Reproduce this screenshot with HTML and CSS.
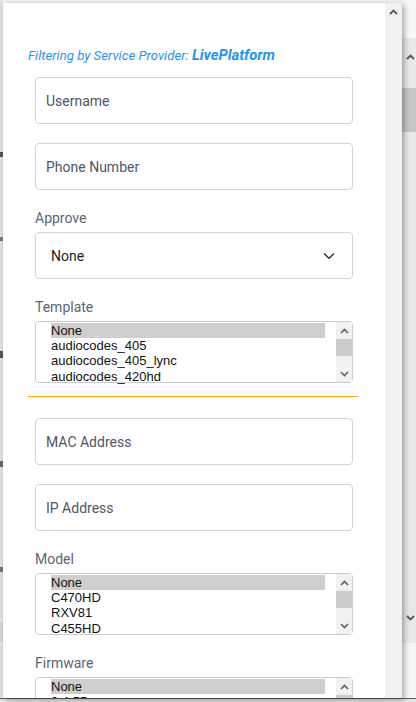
FILE: index.html
```html
<!DOCTYPE html>
<html>
<head>
<meta charset="utf-8">
<link rel="stylesheet" href="styles.css">
</head>
<body>
<div class="page">
  <div class="page-main">
    <div class="bg-left">
      <div class="mark m1"></div>
      <div class="mark m2"></div>
      <div class="mark m3"></div>
      <div class="mark m4"></div>
      <div class="mark m5"></div>
      <div class="mark m6"></div>
    </div>
    <div class="bg-center"></div>
    <div class="bg-right">
      <div class="bg-top"></div>
      <div class="bg-scroll">
        <div class="bg-btn-up"><svg width="9" height="6" viewBox="0 0 9 6"><polyline points="1,5 4.5,1.5 8,5" fill="none" stroke="#555" stroke-width="1.8"/></svg></div>
        <div class="bg-thumb"></div>
        <div class="bg-spacer"></div>
        <div class="bg-btn-down"><svg width="9" height="6" viewBox="0 0 9 6"><polyline points="1,1 4.5,4.5 8,1" fill="none" stroke="#555" stroke-width="1.8"/></svg></div>
      </div>
      <div class="bg-bottom"></div>
    </div>
  </div>
  <div class="page-line"></div>
  <div class="page-foot"></div>
</div>

<div class="modal">
  <div class="modal-body">
    <div class="title">Filtering by Service Provider: <b>LivePlatform</b></div>

    <div class="field">Username</div>
    <div class="field field-last">Phone Number</div>

    <div class="label">Approve</div>
    <div class="field select">
      <span class="select-value">None</span>
      <svg width="12" height="8" viewBox="0 0 12 8"><polyline points="1,1.5 6,6.3 11,1.5" fill="none" stroke="#333" stroke-width="1.5"/></svg>
    </div>

    <div class="label">Template</div>
    <div class="listbox">
      <div class="list-items">
        <div class="item selected">None</div>
        <div class="item">audiocodes_405</div>
        <div class="item">audiocodes_405_lync</div>
        <div class="item">audiocodes_420hd</div>
      </div>
      <div class="lb-scroll">
        <div class="lb-btn"><svg width="9" height="6" viewBox="0 0 9 6"><polyline points="1,5 4.5,1.5 8,5" fill="none" stroke="#606060" stroke-width="1.6"/></svg></div>
        <div class="lb-thumb"></div>
        <div class="lb-spacer"></div>
        <div class="lb-btn"><svg width="9" height="6" viewBox="0 0 9 6"><polyline points="1,1 4.5,4.5 8,1" fill="none" stroke="#606060" stroke-width="1.6"/></svg></div>
      </div>
    </div>

    <div class="divider"></div>

    <div class="field">MAC Address</div>
    <div class="field field-last">IP Address</div>

    <div class="label">Model</div>
    <div class="listbox">
      <div class="list-items">
        <div class="item selected">None</div>
        <div class="item">C470HD</div>
        <div class="item">RXV81</div>
        <div class="item">C455HD</div>
      </div>
      <div class="lb-scroll">
        <div class="lb-btn"><svg width="9" height="6" viewBox="0 0 9 6"><polyline points="1,5 4.5,1.5 8,5" fill="none" stroke="#606060" stroke-width="1.6"/></svg></div>
        <div class="lb-thumb"></div>
        <div class="lb-spacer"></div>
        <div class="lb-btn"><svg width="9" height="6" viewBox="0 0 9 6"><polyline points="1,1 4.5,4.5 8,1" fill="none" stroke="#606060" stroke-width="1.6"/></svg></div>
      </div>
    </div>

    <div class="label label-gap">Firmware</div>
    <div class="listbox">
      <div class="list-items">
        <div class="item selected">None</div>
        <div class="item">2.4.55</div>
        <div class="item">2.4.60</div>
        <div class="item">2.4.70</div>
      </div>
      <div class="lb-scroll">
        <div class="lb-btn"><svg width="9" height="6" viewBox="0 0 9 6"><polyline points="1,5 4.5,1.5 8,5" fill="none" stroke="#606060" stroke-width="1.6"/></svg></div>
        <div class="lb-thumb"></div>
        <div class="lb-spacer"></div>
        <div class="lb-btn"><svg width="9" height="6" viewBox="0 0 9 6"><polyline points="1,1 4.5,4.5 8,1" fill="none" stroke="#606060" stroke-width="1.6"/></svg></div>
      </div>
    </div>
  </div>
  <div class="modal-scroll">
    <div class="ms-btn"><svg width="9" height="6" viewBox="0 0 9 6"><polyline points="1,5 4.5,1.5 8,5" fill="none" stroke="#555" stroke-width="1.8"/></svg></div>
  </div>
</div>
</body>
</html>
```

FILE: styles.css
```css
html, body {
  margin: 0;
  padding: 0;
}
body {
  width: 416px;
  height: 702px;
  overflow: hidden;
  background: #ececec;
  position: relative;
  font-family: Roboto, "Liberation Sans", sans-serif;
}
.page {
  display: flex;
  flex-direction: column;
  height: 702px;
}
.page-main {
  display: flex;
  height: 698px;
}
.bg-left {
  width: 3px;
  background: #e3e3e3;
  display: flex;
  flex-direction: column;
}
.mark {
  width: 3px;
  background: #555;
}
.m1 { margin-top: 152px; height: 5px; }
.m2 { margin-top: 80px; height: 4px; background: #777; }
.m3 { margin-top: 110px; height: 7px; }
.m4 { margin-top: 103px; height: 6px; background: #666; }
.m5 { margin-top: 100px; height: 5px; background: #777; }
.m6 { margin-top: 50px; height: 20px; background: #d6d6d6; }
.bg-center {
  flex: 1;
  background: #f2f2f2;
}
.bg-right {
  width: 14px;
  display: flex;
  flex-direction: column;
}
.bg-top {
  height: 38px;
  background: #f7f7f7;
}
.bg-scroll {
  height: 605px;
  background: #e8e8e8;
  display: flex;
  flex-direction: column;
}
.bg-btn-up {
  height: 38px;
  display: flex;
  align-items: center;
  justify-content: center;
  padding-left: 3px;
}
.bg-thumb {
  margin-top: 12px;
  height: 44px;
  background: #c6c6c6;
}
.bg-spacer {
  flex: 1;
}
.bg-btn-down {
  height: 50px;
  display: flex;
  align-items: center;
  justify-content: center;
  padding-left: 3px;
}
.bg-bottom {
  flex: 1;
  background: #f6f6f6;
}
.page-line {
  height: 1px;
  background: #5a5a5a;
}
.page-foot {
  flex: 1;
  background: #e6e6e6;
}

/* modal overlay */
.modal {
  position: absolute;
  left: 3px;
  top: 3px;
  width: 399px;
  height: 695px;
  display: flex;
  box-shadow: 2px 2px 6px rgba(0, 0, 0, 0.35);
  overflow: hidden;
}
.modal-body {
  width: 382px;
  flex: 0 0 382px;
  box-sizing: border-box;
  background: #fff;
  padding: 42px 32px 0 32px;
  overflow: hidden;
}
.modal-scroll {
  flex: 1;
  background: #f1f1f1;
}
.ms-btn {
  height: 17px;
  display: flex;
  align-items: center;
  justify-content: center;
}

.title {
  margin: 0 0 11px -7px;
  font-style: italic;
  font-size: 13.2px;
  line-height: 20px;
  color: #2196f3;
  white-space: nowrap;
}
.title b {
  font-size: 14.8px;
  font-weight: 700;
}
.field {
  height: 47px;
  box-sizing: border-box;
  border: 1px solid #ced4da;
  border-radius: 4px;
  display: flex;
  align-items: center;
  padding: 0 10px;
  font-size: 14px;
  color: #4f5763;
  margin-bottom: 19px;
}
.field-last {
  margin-bottom: 18px;
}
.select {
  padding: 0 17px 0 15px;
  justify-content: space-between;
  color: #212529;
  margin-bottom: 18px;
}
.label {
  font-size: 14px;
  line-height: 20px;
  color: #5b6573;
  margin-bottom: 4px;
}
.label-gap {
  margin-top: 18px;
}
.listbox {
  height: 62px;
  box-sizing: border-box;
  border: 1px solid #c9cdd2;
  border-radius: 4px;
  display: flex;
}
.list-items {
  flex: 1;
  height: 60px;
  padding: 1px 11px 0 15px;
  font-family: "Liberation Sans", Arial, sans-serif;
  font-size: 13px;
  line-height: 15px;
  color: #111;
}
.item {
  height: 15.2px;
  white-space: nowrap;
}
.item.selected {
  background: #cecece;
}
.lb-scroll {
  width: 16px;
  background: #f1f1f1;
  display: flex;
  flex-direction: column;
}
.lb-btn {
  height: 17px;
  display: flex;
  align-items: center;
  justify-content: center;
}
.lb-thumb {
  height: 17px;
  background: #cdcdcd;
}
.lb-spacer {
  flex: 1;
}
.divider {
  height: 0;
  border-top: 1px solid #ffa800;
  margin: 13px -5px 21px -7px;
}
```
